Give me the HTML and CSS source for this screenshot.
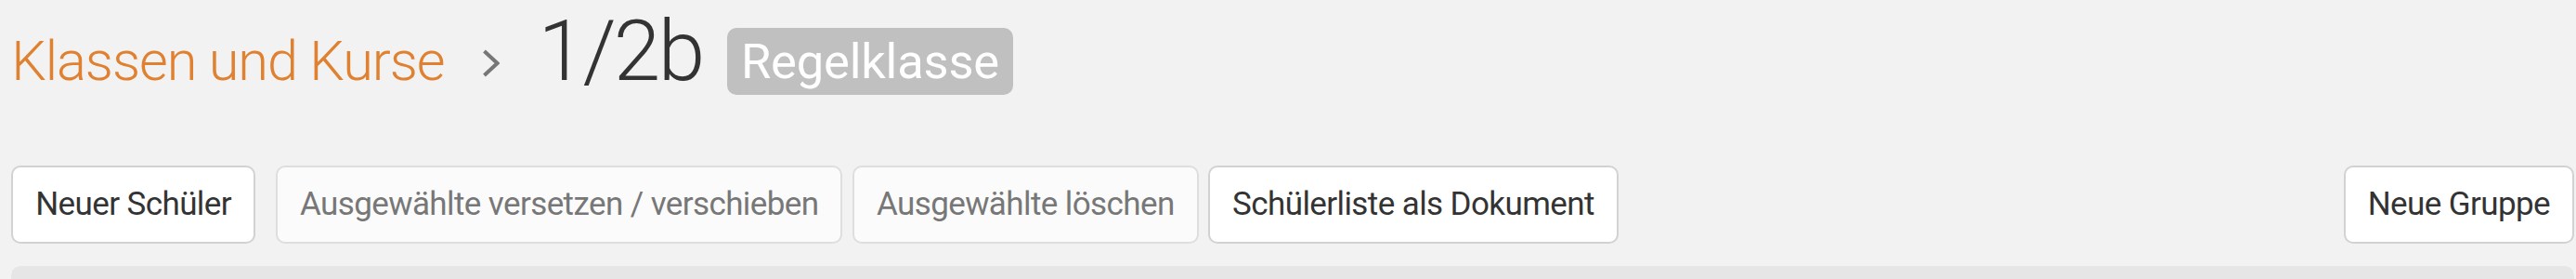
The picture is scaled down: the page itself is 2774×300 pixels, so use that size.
FILE: index.html
```html
<!DOCTYPE html>
<html lang="de">
<head>
<meta charset="utf-8">
<title>1/2b – Klassen und Kurse</title>
<link rel="stylesheet" href="styles.css">
</head>
<body>
<div class="page">
  <div class="header">
    <a class="crumb" href="#">Klassen und Kurse</a>
    <svg class="chevron" width="19" height="33" viewBox="0 0 19 33" aria-hidden="true">
      <polyline points="2.5,2 16.5,15 2.5,28" fill="none" stroke="#777" stroke-width="4" stroke-linejoin="miter"/>
    </svg>
    <h1 class="title">1/2b</h1>
    <span class="badge">Regelklasse</span>
  </div>
  <div class="toolbar">
    <button class="btn btn-first">Neuer Schüler</button>
    <button class="btn" disabled>Ausgewählte versetzen / verschieben</button>
    <button class="btn" disabled>Ausgewählte löschen</button>
    <button class="btn">Schülerliste als Dokument</button>
    <button class="btn btn-right">Neue Gruppe</button>
  </div>
  <div class="panel"></div>
</div>
</body>
</html>
```

FILE: styles.css
```css
html, body {
  margin: 0;
  padding: 0;
  background: #f2f2f2;
  font-family: Roboto, "Liberation Sans", sans-serif;
  overflow: hidden;
}

.page {
  padding: 0 2px 0 12.25px;
}

.header {
  display: flex;
  align-items: baseline;
  padding-top: 1.6px;
}

.crumb {
  font-size: 59.5px;
  font-weight: 300;
  letter-spacing: -1.08px;
  color: #df8130;
  text-decoration: none;
  line-height: normal;
}

.chevron {
  display: block;
  align-self: baseline;
  margin-left: 40.4px;
}

.title {
  margin: 0 0 0 41.7px;
  font-size: 91px;
  font-weight: 300;
  letter-spacing: -2.7px;
  color: #333;
  line-height: normal;
}

.badge {
  align-self: flex-start;
  margin: 28.4px 0 0 26.5px;
  display: block;
  background: #c0c0c0;
  color: #fff;
  font-size: 52.5px;
  font-weight: 400;
  letter-spacing: -0.2px;
  line-height: 71px;
  padding: 1px 15px 0;
  border-radius: 10px;
}

.toolbar {
  display: flex;
  align-items: center;
  gap: 10.5px;
  margin-top: 70px;
}

.btn {
  box-sizing: border-box;
  height: 84px;
  padding: 0 24px;
  font-family: Roboto, "Liberation Sans", sans-serif;
  font-size: 35px;
  font-weight: 400;
  letter-spacing: -0.6px;
  color: #333;
  background: #fff;
  border: 2px solid #d2d2d2;
  border-radius: 10px;
  line-height: normal;
  display: flex;
  align-items: center;
  white-space: nowrap;
}

.btn:disabled {
  background: #fbfbfb;
  color: #777;
  border-color: #dedede;
}

.btn-first {
  margin-right: 11.5px;
}

.btn-right {
  margin-left: auto;
}

.panel {
  margin-top: 24.5px;
  height: 100px;
  background: #e6e6e6;
  border-radius: 10px 10px 0 0;
}
```
